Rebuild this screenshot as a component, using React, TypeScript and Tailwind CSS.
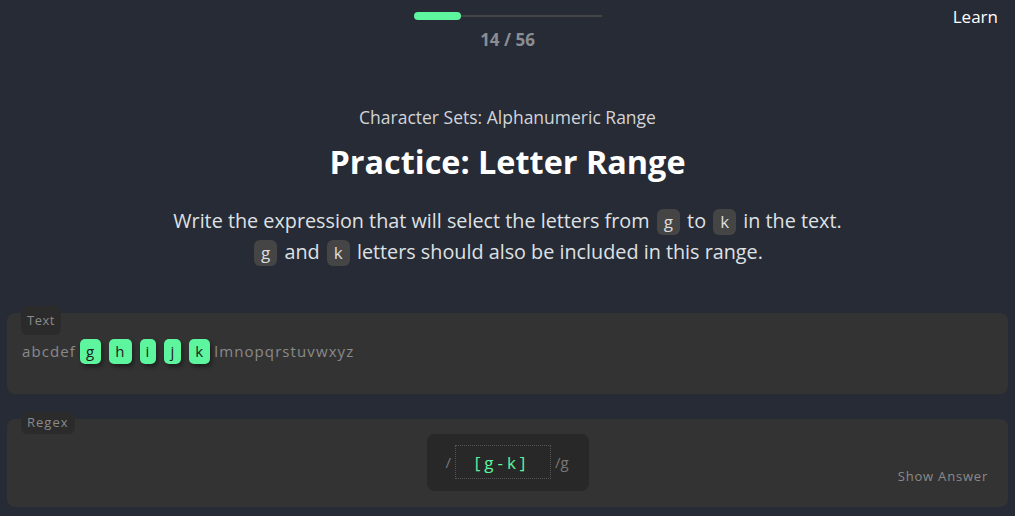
import React from "react";

const Code = ({ c }: { c: string }) => (
  <span className="inline-flex items-center justify-center rounded-[6px] bg-[#454545] text-[#dcdcdc] text-[17px] px-[7px] h-[26px] leading-none align-middle mx-[2px] relative top-[-1px]">
    {c}
  </span>
);

const Hi = ({ c }: { c: string }) => (
  <span className="inline-flex items-center justify-center rounded-[5px] bg-[#5df59e] text-[#1c1c1c] h-[25px] px-[6px] mx-[4px] shadow-[2px_3px_4px_rgba(0,0,0,0.4)]">
    {c}
  </span>
);

export default function App() {
  return (
    <div
      className="w-[1015px] h-[516px] overflow-hidden bg-[#272b35] relative"
      style={{ fontFamily: '"Open Sans", "Noto Sans", sans-serif' }}
    >
      <div className="absolute right-[17px] top-[4px] text-white text-[17px]">Learn</div>
      <div className="flex flex-col items-center pt-[12px]">
        <div className="w-[188px] h-[8px] relative flex items-center">
          <div className="w-full h-[2px] bg-[#444]" />
          <div className="absolute left-0 top-[0px] h-[8px] w-[47px] rounded-full bg-[#5df59e]" />
        </div>
        <div className="mt-[7px] text-[17px] font-bold text-[#8a8d93]">14 / 56</div>
        <div className="mt-[51px] text-[17.5px] text-[#d2d4d8]">Character Sets: Alphanumeric Range</div>
        <div className="mt-[10px] text-[32.4px] font-bold text-white leading-[1.3]">Practice: Letter Range</div>
        <div className="mt-[23px] text-[19.8px] text-[#dfe1e4] text-center leading-[31px]">
          <div>
            Write the expression that will select the letters from <Code c="g" /> to <Code c="k" /> in the text.
          </div>
          <div>
            <Code c="g" /> and <Code c="k" /> letters should also be included in this range.
          </div>
        </div>
      </div>

      <div className="mx-[7px] mt-[46px] h-[81px] rounded-[8px] bg-[#333333] relative">
        <div className="absolute left-[14px] top-[-7px] h-[29px] px-[6px] rounded-[6px] bg-[#2b2b2b] text-[#8a8a8a] text-[13px] tracking-[0.5px] flex items-start pt-[5px]">
          Text
        </div>
        <div className="absolute left-[15px] top-[26px] flex items-center text-[15px] text-[#8a8a8a] tracking-[1.1px]">
          <span>abcdef</span>
          <Hi c="g" />
          <Hi c="h" />
          <Hi c="i" />
          <Hi c="j" />
          <Hi c="k" />
          <span>lmnopqrstuvwxyz</span>
        </div>
      </div>

      <div className="mx-[7px] mt-[25px] h-[88px] rounded-[8px] bg-[#333333] relative">
        <div className="absolute left-[14px] top-[-7px] h-[22px] px-[6px] rounded-[6px] bg-[#2b2b2b] text-[#8a8a8a] text-[13px] tracking-[1px] flex items-center">
          Regex
        </div>
        <div className="flex justify-center pt-[15px]">
          <div className="w-[162px] h-[57px] rounded-[8px] bg-[#282828] flex items-center pl-[19px]">
            <span className="text-[#777] text-[15px]">/</span>
            <div className="ml-[4px] w-[96px] h-[34px] border border-dotted border-[#555] flex items-center justify-center text-[#5df59e] text-[17px] tracking-[4px] pr-[2px]">
              [g-k]
            </div>
            <span className="ml-[4px] text-[#777] text-[15px]">/g</span>
          </div>
        </div>
        <div className="absolute right-[20px] bottom-[20px] text-[13px] text-[#8a8a8a] tracking-[0.8px]">Show Answer</div>
      </div>
    </div>
  );
}
